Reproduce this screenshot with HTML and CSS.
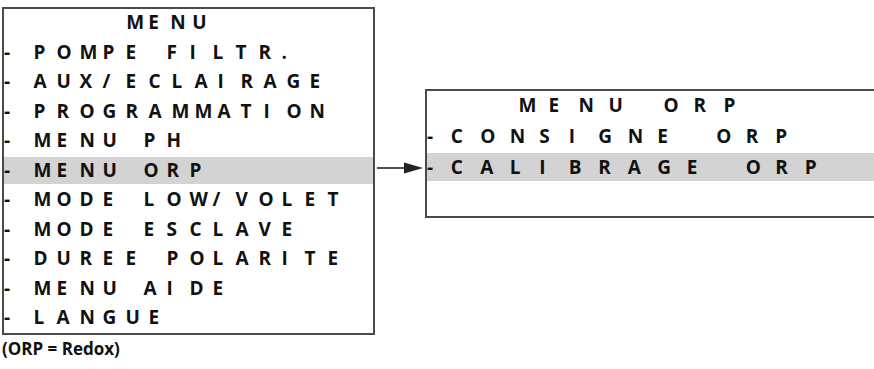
FILE: index.html
```html
<!DOCTYPE html>
<html lang="fr">
<head>
  <meta charset="UTF-8">
  <title>Menu ORP</title>
  <link rel="stylesheet" href="styles.css">
</head>
<body>
  <div class="scene">
    <div class="left-col">
      <div class="lcd lcd-main">
        <div class="lcd-row lcd-title"><span class="cells">MENU</span></div>
        <div class="lcd-row"><span class="dash">-</span><span class="cells">POMPE FILTR.</span></div>
        <div class="lcd-row"><span class="dash">-</span><span class="cells">AUX/ECLAIRAGE</span></div>
        <div class="lcd-row"><span class="dash">-</span><span class="cells">PROGRAMMATION</span></div>
        <div class="lcd-row"><span class="dash">-</span><span class="cells">MENU PH</span></div>
        <div class="lcd-row selected"><span class="dash">-</span><span class="cells">MENU ORP</span></div>
        <div class="lcd-row"><span class="dash">-</span><span class="cells">MODE LOW/VOLET</span></div>
        <div class="lcd-row"><span class="dash">-</span><span class="cells">MODE ESCLAVE</span></div>
        <div class="lcd-row"><span class="dash">-</span><span class="cells">DUREE POLARITE</span></div>
        <div class="lcd-row"><span class="dash">-</span><span class="cells">MENU AIDE</span></div>
        <div class="lcd-row"><span class="dash">-</span><span class="cells">LANGUE</span></div>
      </div>
      <p class="note">(ORP = Redox)</p>
    </div>

    <svg class="arrow" width="50" height="14" viewBox="0 0 50 14">
      <line x1="2" y1="7" x2="34" y2="7" stroke="#222" stroke-width="1.6"/>
      <polygon points="29,1.5 48,7 29,12.5" fill="#222"/>
    </svg>

    <div class="lcd lcd-sub">
      <div class="lcd-row lcd-title"><span class="cells">MENU ORP</span></div>
      <div class="lcd-row"><span class="dash">-</span><span class="cells">CONSIGNE ORP</span></div>
      <div class="lcd-row selected"><span class="dash">-</span><span class="cells">CALIBRAGE ORP</span></div>
      <div class="lcd-row"></div>
    </div>
  </div>

  <script>
    // chaque caractère dans une case fixe, comme sur l'afficheur
    document.querySelectorAll(".cells").forEach(function (el) {
      const text = el.textContent;
      el.textContent = "";
      for (const ch of text) {
        const cell = document.createElement("span");
        cell.className = ch === " " ? "cell space" : "cell";
        cell.textContent = ch;
        el.appendChild(cell);
      }
    });
  </script>
</body>
</html>
```

FILE: styles.css
```css
body {
  margin: 0;
  background-color: #ffffff;
  font-family: "Open Sans", Arial, sans-serif;
  color: #111111;
  overflow: hidden;
}
.scene {
  display: flex;
  align-items: flex-start;
  padding: 7px 0 0 2px;
}
.left-col {
  width: 373px;
  flex: none;
}
.lcd {
  border: 2px solid #4a4a4a;
  background-color: #ffffff;
  display: flex;
  flex-direction: column;
  font-weight: 700;
  font-size: 19px;
}
.lcd-row {
  display: flex;
  align-items: center;
  height: 27px;
  line-height: 27px;
}
.lcd-row.selected {
  background-color: #d3d3d3;
}
.cells {
  display: flex;
}
.cell {
  flex: none;
  width: var(--cell);
  white-space: pre;
}
.cell.space {
  width: var(--space, var(--cell));
}
.dash {
  flex: none;
  width: var(--lead);
}

/* menu principal */
.lcd-main {
  --cell: 23px;
  --space: 18px;
  --lead: 29.4px;
  gap: 2.5px;
  padding-bottom: 2px;
}
.lcd-main .lcd-title {
  --cell: 22px;
  padding-left: 122.3px;
}

/* sous-menu ORP */
.lcd-sub {
  --cell: 29.5px;
  --lead: 23.7px;
  flex: 1;
  margin-top: 82px;
  border-right: none;
  gap: 3px;
  padding-bottom: 4px;
}
.lcd-sub .lcd-title {
  --cell: 30px;
  --space: 25px;
  padding-left: 91.5px;
}
.lcd-sub .lcd-row {
  height: 28px;
  line-height: 28px;
}

.arrow {
  flex: none;
  margin-top: 154px;
}
.note {
  margin: 3px 0 0;
  font-size: 17px;
  font-weight: 700;
  line-height: 22px;
}
```
